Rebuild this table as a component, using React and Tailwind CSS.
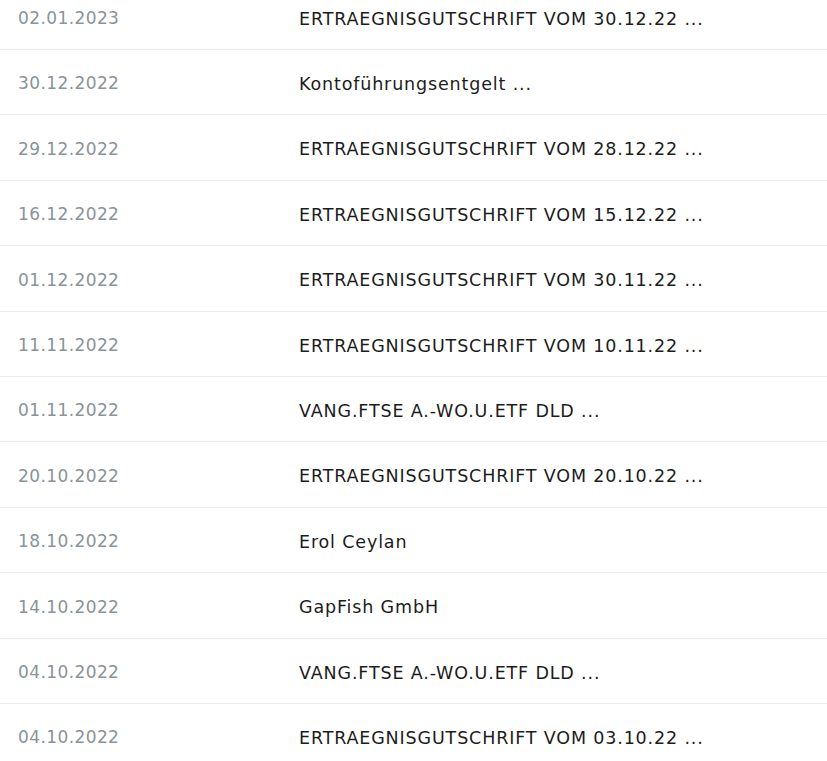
import React from 'react';

const ROWS = [
    ['02.01.2023', 'ERTRAEGNISGUTSCHRIFT VOM 30.12.22 ...'],
    ['30.12.2022', 'Kontoführungsentgelt ...'],
    ['29.12.2022', 'ERTRAEGNISGUTSCHRIFT VOM 28.12.22 ...'],
    ['16.12.2022', 'ERTRAEGNISGUTSCHRIFT VOM 15.12.22 ...'],
    ['01.12.2022', 'ERTRAEGNISGUTSCHRIFT VOM 30.11.22 ...'],
    ['11.11.2022', 'ERTRAEGNISGUTSCHRIFT VOM 10.11.22 ...'],
    ['01.11.2022', 'VANG.FTSE A.-WO.U.ETF DLD ...'],
    ['20.10.2022', 'ERTRAEGNISGUTSCHRIFT VOM 20.10.22 ...'],
    ['18.10.2022', 'Erol Ceylan'],
    ['14.10.2022', 'GapFish GmbH'],
    ['04.10.2022', 'VANG.FTSE A.-WO.U.ETF DLD ...'],
    ['04.10.2022', 'ERTRAEGNISGUTSCHRIFT VOM 03.10.22 ...'],
];

const App = () => {
    return (
        <div className="bg-white min-h-screen overflow-hidden font-['DejaVu_Sans',sans-serif]">
            <ul className="mt-[-15.4px]">
                {ROWS.map(([date, text], i) => (
                    <li
                        key={i}
                        className="h-[65.4px] pt-[4px] flex items-center border-b border-[#ebebeb]"
                    >
                        <span className="w-[299px] pl-[18px] text-[17px] tracking-[0.4px] text-[#8a9399]">{date}</span>
                        <span className="text-[17.5px] tracking-[0.85px] text-[#1c1c1c]">{text}</span>
                    </li>
                ))}
            </ul>
        </div>
    );
};

export default App;
